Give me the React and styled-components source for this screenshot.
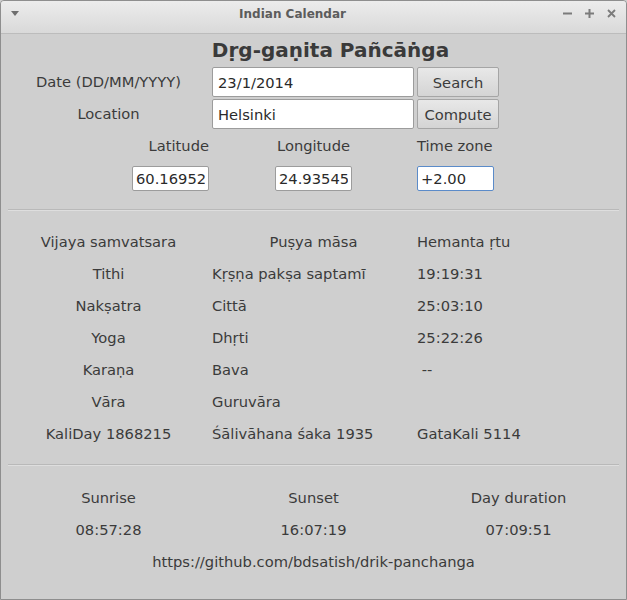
import React from 'react';
import styled, { createGlobalStyle } from 'styled-components';

const GlobalStyle = createGlobalStyle`
  html, body {
    margin: 0;
    padding: 0;
    background: #cfcfcf;
  }
  body {
    font-family: "DejaVu Sans", "Noto Sans", sans-serif;
    font-size: 14.7px;
    color: #3b3b3b;
  }
  * {
    box-sizing: border-box;
  }
`;

const Window = styled.div`
  width: 627px;
  height: 600px;
  background: #cfcfcf;
  border: 1px solid #8e8e8e;
  border-radius: 4px 4px 0 0;
  overflow: hidden;
`;

const TitleBar = styled.div`
  height: 33px;
  padding-bottom: 7px;
  display: flex;
  align-items: center;
  background: linear-gradient(#ececec, #d9d9d9);
  border-bottom: 1px solid #bcbcbc;
`;

const MenuArea = styled.div`
  width: 28px;
  height: 26px;
  display: flex;
  align-items: center;
  justify-content: center;
`;

const Title = styled.div`
  flex: 1;
  text-align: center;
  font-size: 12px;
  font-weight: bold;
  color: #5c5c5c;
`;

const Controls = styled.div`
  display: flex;
  padding-right: 4px;
`;

const ControlButton = styled.div`
  width: 22px;
  height: 26px;
  display: flex;
  align-items: center;
  justify-content: center;
`;

const Content = styled.div`
  padding: 0 5px;
`;

const Heading = styled.h1`
  margin: 4px 0 0;
  padding-left: 34px;
  height: 24px;
  line-height: 24px;
  text-align: center;
  font-size: 20px;
  font-weight: bold;
  color: #3a3a3a;
`;

const FormGrid = styled.div`
  margin-top: 5px;
  display: grid;
  grid-template-columns: 205px 205px 205px;
  grid-auto-rows: 30px;
  row-gap: 2px;
  align-items: center;
`;

const FieldLabel = styled.div`
  text-align: center;
  margin-top: -1px;
`;

const TextField = styled.input`
  height: 30px;
  margin-left: 1px;
  width: ${(p) => p.$width}px;
  padding: 0 5px;
  font: inherit;
  color: #2a2a2a;
  background: #fff;
  border: 1px solid ${(p) => (p.$focused ? '#5b8bc9' : '#9c9c9c')};
  border-radius: 2px;
  outline: none;
`;

const Button = styled.button`
  height: 30px;
  width: 82px;
  margin-left: 1px;
  padding: 0;
  font: inherit;
  color: #3b3b3b;
  background: linear-gradient(#e8e8e8, #d4d4d4);
  border: 1px solid #a5a5a5;
  border-radius: 2px;
`;

const CoordGrid = styled.div`
  display: grid;
  grid-template-columns: 205px 205px 205px;
  grid-template-rows: 33px 33px;
  align-items: center;
`;

const CoordCell = styled.div`
  justify-self: ${(p) => p.$align};
  margin: ${(p) => (p.$align === 'end' ? '0 2px 0 0' : p.$align === 'start' ? '0 0 0 1px' : '0')};
  display: flex;
  justify-content: center;
`;

const SmallField = styled(TextField)`
  height: 25px;
  width: 77px;
  margin-left: 0;
  padding: 0 3px;
`;

const Separator = styled.hr`
  margin: ${(p) => p.$top}px 2px 0;
  height: 2px;
  border: none;
  border-top: 1px solid #b9b9b9;
  border-bottom: 1px solid #dedede;
`;

const InfoGrid = styled.div`
  padding: ${(p) => p.$pad}px 0 0;
  display: grid;
  grid-template-columns: 205px 205px 205px;
  grid-auto-rows: 32px;
  align-items: center;
`;

const Cell = styled.div`
  text-align: ${(p) => p.$align || 'left'};
  padding-left: ${(p) => (p.$align === 'center' ? 0 : 1)}px;
  white-space: pre;
`;

const Link = styled.div`
  grid-column: 1 / 4;
  text-align: center;
`;

const MenuIcon = () => (
  <svg width="8" height="5" viewBox="0 0 8 5">
    <path d="M0 0 H8 L4 5 Z" fill="#6e6e6e" />
  </svg>
);

const MinIcon = () => (
  <svg width="9" height="9" viewBox="0 0 9 9">
    <path d="M0 4.5 H9" stroke="#7b7b7b" strokeWidth="2" />
  </svg>
);

const MaxIcon = () => (
  <svg width="9" height="9" viewBox="0 0 9 9">
    <path d="M0 4.5 H9 M4.5 0 V9" stroke="#7b7b7b" strokeWidth="2" />
  </svg>
);

const CloseIcon = () => (
  <svg width="9" height="9" viewBox="0 0 9 9">
    <path d="M1 1 L8 8 M8 1 L1 8" stroke="#7b7b7b" strokeWidth="1.8" />
  </svg>
);

const rows = [
  ['Tithi', 'Kṛṣṇa pakṣa saptamī', '19:19:31'],
  ['Nakṣatra', 'Cittā', '25:03:10'],
  ['Yoga', 'Dhṛti', '25:22:26'],
  ['Karaṇa', 'Bava', ' --'],
  ['Vāra', 'Guruvāra', ''],
  ['KaliDay 1868215', 'Śālivāhana śaka 1935', 'GataKali 5114'],
];

const App = () => (
  <Window>
    <GlobalStyle />
    <TitleBar>
      <MenuArea>
        <MenuIcon />
      </MenuArea>
      <Title>Indian Calendar</Title>
      <Controls>
        <ControlButton><MinIcon /></ControlButton>
        <ControlButton><MaxIcon /></ControlButton>
        <ControlButton><CloseIcon /></ControlButton>
      </Controls>
    </TitleBar>
    <Content>
      <Heading>Dṛg-gaṇita Pañcāṅga</Heading>
      <FormGrid>
        <FieldLabel>Date (DD/MM/YYYY)</FieldLabel>
        <TextField $width={202} defaultValue="23/1/2014" />
        <Button>Search</Button>
        <FieldLabel>Location</FieldLabel>
        <TextField $width={202} defaultValue="Helsinki" />
        <Button>Compute</Button>
      </FormGrid>
      <CoordGrid>
        <CoordCell $align="end">Latitude</CoordCell>
        <CoordCell $align="center">Longitude</CoordCell>
        <CoordCell $align="start">Time zone</CoordCell>
        <CoordCell $align="end">
          <SmallField defaultValue="60.16952" />
        </CoordCell>
        <CoordCell $align="center">
          <SmallField defaultValue="24.93545" />
        </CoordCell>
        <CoordCell $align="start">
          <SmallField $focused defaultValue="+2.00" />
        </CoordCell>
      </CoordGrid>
      <Separator $top={14} />
      <InfoGrid $pad={14}>
        <Cell $align="center">Vijaya samvatsara</Cell>
        <Cell $align="center">Puṣya māsa</Cell>
        <Cell>Hemanta ṛtu</Cell>
        {rows.map(([name, value, time]) => (
          <React.Fragment key={name}>
            <Cell $align="center">{name}</Cell>
            <Cell>{value}</Cell>
            <Cell>{time}</Cell>
          </React.Fragment>
        ))}
      </InfoGrid>
      <Separator $top={15} />
      <InfoGrid $pad={15}>
        <Cell $align="center">Sunrise</Cell>
        <Cell $align="center">Sunset</Cell>
        <Cell $align="center">Day duration</Cell>
        <Cell $align="center">08:57:28</Cell>
        <Cell $align="center">16:07:19</Cell>
        <Cell $align="center">07:09:51</Cell>
        <Link>https://github.com/bdsatish/drik-panchanga</Link>
      </InfoGrid>
    </Content>
  </Window>
);

export default App;
